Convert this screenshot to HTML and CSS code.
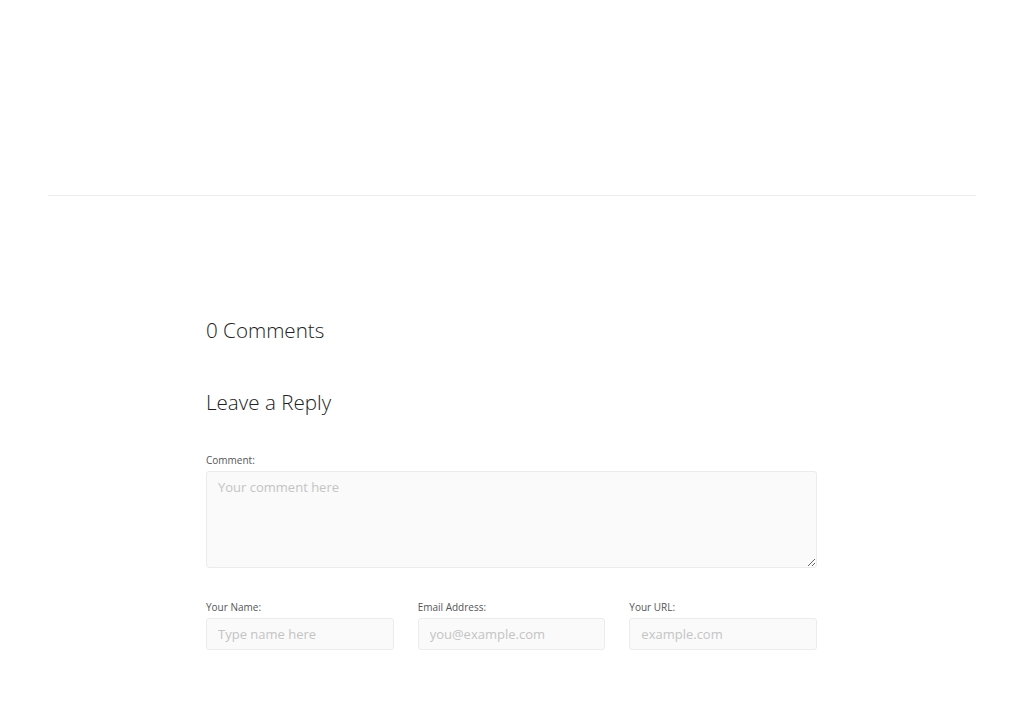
FILE: index.html
```html
<!DOCTYPE html>
<html lang="en">
<head>
    <meta charset="UTF-8">
    <meta name="viewport" content="width=device-width, initial-scale=1.0">
    <title>Leave a Reply</title>
    <link rel="stylesheet" href="styles.css">
</head>
<body>
    <div class="post__end"></div>
    <hr class="divider">

    <section class="comments">
        <h2 class="comments__title">0 Comments</h2>
        <h2 class="reply__title">Leave a Reply</h2>

        <form class="reply__form">
            <label class="field__label" for="comment">Comment:</label>
            <textarea class="field__textarea" id="comment" placeholder="Your comment here"></textarea>

            <div class="fields__row">
                <div class="field">
                    <label class="field__label" for="name">Your Name:</label>
                    <input class="field__input" type="text" id="name" placeholder="Type name here">
                </div>
                <div class="field">
                    <label class="field__label" for="email">Email Address:</label>
                    <input class="field__input" type="email" id="email" placeholder="you@example.com">
                </div>
                <div class="field">
                    <label class="field__label" for="url">Your URL:</label>
                    <input class="field__input" type="text" id="url" placeholder="example.com">
                </div>
            </div>
        </form>
    </section>
</body>
</html>
```

FILE: styles.css
```css
body {
    margin: 0;
    font-family: "Open Sans", sans-serif;
    color: #222;
    background-color: #fff;
}
.post__end {
    height: 195px;
}
.divider {
    margin: 0 48px;
    border: 0;
    border-top: 1px solid #ececec;
}
.comments {
    width: 611px;
    margin: 0 auto;
    padding: 0 1px 60px 0;
}
.comments__title,
.reply__title {
    margin: 0;
    font-size: 20.6px;
    font-weight: 300;
    line-height: 30px;
    color: #222;
}
.comments__title {
    margin-top: 119px;
}
.reply__title {
    margin-top: 42px;
}
.reply__form {
    margin-top: 36px;
}
.field__label {
    display: block;
    font-size: 10px;
    line-height: 14px;
    color: #555;
    margin-bottom: 4px;
}
.field__textarea,
.field__input {
    display: block;
    box-sizing: border-box;
    width: 100%;
    font-family: "Open Sans", sans-serif;
    font-size: 13px;
    color: #333;
    background-color: #fafafa;
    border: 1px solid #ececec;
    border-radius: 3px;
    padding: 0 11px;
    margin: 0;
    outline: none;
}
.field__textarea {
    height: 97px;
    padding-top: 6px;
    resize: vertical;
}
.field__input {
    height: 32px;
}
.field__textarea::placeholder,
.field__input::placeholder {
    color: #c4c4c4;
}
.fields__row {
    display: grid;
    grid-template-columns: repeat(3, 1fr);
    gap: 24px;
    margin-top: 32px;
}
```
